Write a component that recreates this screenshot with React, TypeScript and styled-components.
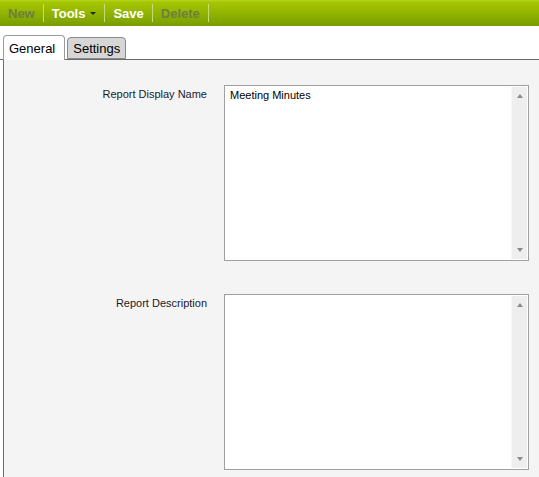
import styled, { createGlobalStyle } from "styled-components";

const GlobalStyle = createGlobalStyle`
  html, body {
    margin: 0;
    padding: 0;
    background: #ffffff;
    font-family: "Liberation Sans", Arial, sans-serif;
  }
`;

const Toolbar = styled.div`
  display: flex;
  align-items: center;
  height: 26px;
  background: linear-gradient(to bottom, #b8d626 0px, #a6c600 2px, #90b300 14px, #7a9c00 26px);
  box-sizing: border-box;
`;

const ToolButton = styled.div<{ disabled?: boolean }>`
  display: flex;
  align-items: center;
  gap: 5px;
  padding: 0 8px;
  height: 26px;
  font-size: 13px;
  font-weight: bold;
  color: ${(p) => (p.disabled ? "#6e7e44" : "#ffffff")};
  cursor: default;
`;

const Separator = styled.div`
  width: 1px;
  height: 18px;
  background: #c6dc7c;
`;

const DropArrow = styled.span`
  display: inline-block;
  width: 0;
  height: 0;
  border-left: 3px solid transparent;
  border-right: 3px solid transparent;
  border-top: 3px solid #1f2a00;
`;

const TabStrip = styled.div`
  display: flex;
  align-items: flex-end;
  gap: 2px;
  padding: 8px 0 0 3px;
  height: 25px;
  border-bottom: 1px solid #6a6a6a;
`;

const Tab = styled.div<{ active?: boolean }>`
  box-sizing: border-box;
  height: ${(p) => (p.active ? "25px" : "22px")};
  margin-bottom: ${(p) => (p.active ? "-1px" : "0")};
  padding: ${(p) => (p.active ? "5px 9px 0 5px" : "3px 5px 0 5px")};
  font-size: 13px;
  color: #000;
  background: ${(p) => (p.active ? "#ffffff" : "#d6d6d6")};
  border: 1px solid ${(p) => (p.active ? "#9a9a9a" : "#8a8a8a")};
  border-bottom: ${(p) => (p.active ? "none" : "1px solid #8a8a8a")};
  border-radius: 4px 4px 0 0;
`;

const Panel = styled.div`
  margin-left: 3px;
  border-left: 1px solid #6a6a6a;
  background: #f4f4f4;
  padding: 25px 10px 9px 0;
  display: flex;
  flex-direction: column;
  gap: 33px;
`;

const FieldRow = styled.div`
  display: grid;
  grid-template-columns: 203px 305px;
  column-gap: 17px;
`;

const Label = styled.div`
  text-align: right;
  font-size: 11px;
  color: #1a1a2a;
  padding-top: 3px;
`;

const TextBox = styled.div`
  box-sizing: border-box;
  height: 176px;
  border: 1px solid #a0a0a0;
  background: #ffffff;
  display: flex;
`;

const TextValue = styled.div`
  flex: 1;
  font-size: 11px;
  color: #000;
  padding: 3px 5px;
`;

const ScrollBar = styled.div`
  width: 16px;
  margin: 1px 1px 1px 0;
  background: #eeeeee;
  border-left: 1px solid #f6f6f6;
  display: flex;
  flex-direction: column;
  justify-content: space-between;
  align-items: center;
  padding: 7px 0;
  box-sizing: border-box;
`;

const Arrow = styled.span<{ down?: boolean }>`
  width: 0;
  height: 0;
  border-left: 3px solid transparent;
  border-right: 3px solid transparent;
  ${(p) =>
    p.down ? "border-top: 4px solid #8a8a8a;" : "border-bottom: 4px solid #8a8a8a;"}
`;

const fields = [
  { label: "Report Display Name", value: "Meeting Minutes" },
  { label: "Report Description", value: "" },
];

const App = () => {
  return (
    <>
      <GlobalStyle />
      <Toolbar>
        <ToolButton disabled>New</ToolButton>
        <Separator />
        <ToolButton>
          Tools
          <DropArrow />
        </ToolButton>
        <Separator />
        <ToolButton>Save</ToolButton>
        <Separator />
        <ToolButton disabled>Delete</ToolButton>
        <Separator />
      </Toolbar>
      <TabStrip>
        <Tab active>General</Tab>
        <Tab>Settings</Tab>
      </TabStrip>
      <Panel>
        {fields.map((f) => (
          <FieldRow key={f.label}>
            <Label>{f.label}</Label>
            <TextBox>
              <TextValue>{f.value}</TextValue>
              <ScrollBar>
                <Arrow />
                <Arrow down />
              </ScrollBar>
            </TextBox>
          </FieldRow>
        ))}
      </Panel>
    </>
  );
};

export default App;
